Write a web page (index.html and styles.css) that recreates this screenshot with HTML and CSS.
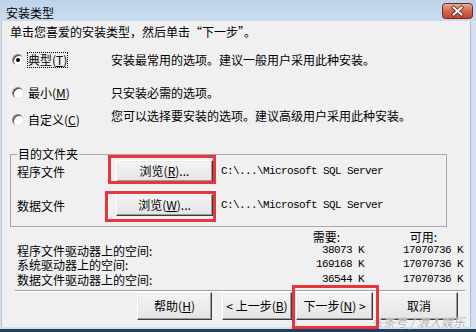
FILE: index.html
```html
<!DOCTYPE html>
<html lang="zh-CN">
<head>
<meta charset="utf-8">
<title>安装类型</title>
<link rel="stylesheet" href="styles.css">
</head>
<body>
<div class="window">
  <div class="titlebar">
    <span class="title">安装类型</span>
    <span class="close">
      <svg width="31" height="16" viewBox="0 0 31 16">
        <defs>
          <linearGradient id="cg" x1="0" y1="0" x2="0" y2="1">
            <stop offset="0" stop-color="#eab0a2"/>
            <stop offset="0.45" stop-color="#d56d58"/>
            <stop offset="1" stop-color="#c2412c"/>
          </linearGradient>
        </defs>
        <rect x="0.5" y="0.5" width="30" height="15" rx="3" fill="url(#cg)" stroke="#6b2a20"/>
        <path d="M11.5 4.5 L19.5 11.5 M19.5 4.5 L11.5 11.5" stroke="#5a2018" stroke-width="3.6" stroke-linecap="square"/>
        <path d="M11.5 4.5 L19.5 11.5 M19.5 4.5 L11.5 11.5" stroke="#ffffff" stroke-width="2" stroke-linecap="square"/>
      </svg>
    </span>
  </div>
  <div class="body">
    <p class="intro">单击您喜爱的安装类型，然后单击“下一步”。</p>
    <div class="options">
      <div class="opt">
        <div class="choice"><span class="radio checked"></span><span class="label focus">典型(<u>T</u>)</span></div>
        <span class="desc">安装最常用的选项。建议一般用户采用此种安装。</span>
      </div>
      <div class="opt opt-min">
        <div class="choice"><span class="radio"></span><span class="label">最小(<u>M</u>)</span></div>
        <span class="desc">只安装必需的选项。</span>
      </div>
      <div class="opt opt-custom">
        <div class="choice"><span class="radio"></span><span class="label">自定义(<u>C</u>)</span></div>
        <span class="desc desc-up">您可以选择要安装的选项。建议高级用户采用此种安装。</span>
      </div>
    </div>
    <fieldset class="dest">
      <legend>目的文件夹</legend>
      <div class="dest-row">
        <span>程序文件</span>
        <button class="btn btn-browse">浏览(<u>R</u>)...</button>
        <span class="path mono">C:\...\Microsoft SQL Server</span>
      </div>
      <div class="dest-row">
        <span>数据文件</span>
        <button class="btn btn-browse">浏览(<u>W</u>)...</button>
        <span class="path mono">C:\...\Microsoft SQL Server</span>
      </div>
    </fieldset>
    <div class="space">
      <span></span>
      <span class="head head-need">需要:</span>
      <span class="head head-free">可用:</span>
      <span>程序文件驱动器上的空间:</span>
      <span class="num mono">38073 K</span>
      <span class="num mono">17070736 K</span>
      <span>系统驱动器上的空间:</span>
      <span class="num mono">169168 K</span>
      <span class="num mono">17070736 K</span>
      <span>数据文件驱动器上的空间:</span>
      <span class="num mono">36544 K</span>
      <span class="num mono">17070736 K</span>
    </div>
    <div class="sep"></div>
    <div class="actions">
      <button class="btn btn-help">帮助(<u>H</u>)</button>
      <button class="btn btn-back">&lt; 上一步(<u>B</u>)</button>
      <button class="btn btn-next">下一步(<u>N</u>) &gt;</button>
      <button class="btn btn-cancel">取消</button>
    </div>
  </div>
  <div class="frame-bottom"></div>
  <span class="watermark">头条号 / 浪人娱乐</span>
  <span class="mark mark-1"></span>
  <span class="mark mark-2"></span>
  <span class="mark mark-3"></span>
</div>
</body>
</html>
```

FILE: styles.css
```css
html, body {
  margin: 0;
  padding: 0;
}

body {
  font-family: "Noto Sans CJK SC", "Liberation Sans", sans-serif;
  font-size: 12px;
  color: #000;
}

.window {
  position: relative;
  width: 476px;
  height: 332px;
  overflow: hidden;
  background: #d3e1ef;
  display: flex;
  flex-direction: column;
}

.titlebar {
  flex: none;
  height: 21px;
  display: flex;
  justify-content: space-between;
  align-items: flex-start;
  padding-left: 6px;
  background: linear-gradient(#bed3ea, #c9dbee);
}

.title {
  padding-top: 6px;
  line-height: 14px;
}

.close {
  display: block;
  margin-top: 3px;
  margin-right: 3px;
  height: 16px;
}

.close svg {
  display: block;
}

.body {
  flex: none;
  height: 306px;
  margin: 0 5px 0 1px;
  border-left: 1px solid #b7c8db;
  border-right: 1px solid #a9bbd0;
  background: #f0f0f0;
}

.intro {
  margin: 0;
  padding: 4px 0 0 8px;
  line-height: 14px;
  white-space: nowrap;
}

.options {
  margin-top: 13px;
}

.opt {
  display: grid;
  grid-template-columns: 99px auto;
  align-items: center;
  height: 16px;
  padding-left: 10px;
}

.opt-min {
  margin-top: 17px;
}

.opt-custom {
  margin-top: 11px;
}

.choice {
  display: flex;
  align-items: center;
  gap: 4px;
}

.radio {
  position: relative;
  width: 12px;
  height: 12px;
  box-sizing: border-box;
  border-radius: 50%;
  background: #fff;
  border: 1px solid;
  border-color: #8a8a8a #e4e4e4 #e4e4e4 #8a8a8a;
  box-shadow: inset 1px 1px 0 #404040;
}

.radio.checked::after {
  content: "";
  position: absolute;
  left: 3px;
  top: 3px;
  width: 4px;
  height: 4px;
  border-radius: 50%;
  background: #000;
}

.label {
  line-height: 14px;
  white-space: nowrap;
}

.focus {
  outline: 1px dotted #000;
}

.desc {
  line-height: 14px;
  white-space: nowrap;
}

.desc-up {
  margin-top: -8px;
}

.dest {
  margin: 20px 0 0 8px;
  width: 437px;
  box-sizing: border-box;
  padding: 0 0 10px 6px;
  border: 1px solid #a7a7a7;
  min-inline-size: 0;
}

.dest legend {
  padding: 0 1px;
  line-height: 12px;
}

.dest-row {
  display: grid;
  grid-template-columns: 99px 97px auto;
  align-items: center;
  height: 22px;
}

.dest-row + .dest-row {
  margin-top: 12px;
}

.mono {
  font-family: "Liberation Mono", "DejaVu Sans Mono", monospace;
  font-size: 11px;
  letter-spacing: -0.6px;
}

.path {
  padding-left: 8px;
  white-space: nowrap;
}

.btn {
  font-family: "Noto Sans CJK SC", "Liberation Sans", sans-serif;
  font-size: 12px;
  color: #000;
  padding: 0;
  margin: 0;
  box-sizing: border-box;
  background: linear-gradient(#f4f4f4, #e4e4e4);
  border: 1px solid;
  border-color: #ffffff #3c3c3c #3c3c3c #ffffff;
  box-shadow: inset -1px -1px 0 #9c9c9c, inset 1px 1px 0 #e8e8e8;
  white-space: nowrap;
  line-height: 14px;
}

.btn-browse {
  width: 97px;
  height: 22px;
}

.space {
  margin-top: 3px;
  padding: 0 7px 0 15px;
  display: grid;
  grid-template-columns: 1fr 80px 99px;
  grid-template-rows: 13px 14px 15px 15px;
  align-items: center;
  line-height: 13px;
  white-space: nowrap;
}

.head {
  text-align: right;
}

.head-need {
  padding-right: 24px;
}

.head-free {
  padding-right: 26px;
}

.num {
  text-align: right;
}

.sep {
  margin: 3px 5px 0 13px;
  height: 0;
  border-top: 1px solid #a0a0a0;
  border-bottom: 1px solid #ffffff;
}

.actions {
  display: flex;
  justify-content: flex-end;
  padding-right: 12px;
  height: 28px;
}

.actions .btn {
  height: 28px;
}

.btn-help {
  width: 75px;
}

.btn-back {
  width: 70px;
  margin-left: 10px;
}

.btn-next {
  width: 77px;
  margin-left: 4px;
}

.btn-cancel {
  width: 78px;
  margin-left: 7px;
}

.frame-bottom {
  flex: none;
  margin-top: 2px;
  height: 3px;
  background: #213f5c;
}

.watermark {
  position: absolute;
  left: 371px;
  top: 316px;
  font-size: 12px;
  line-height: 12px;
  font-style: italic;
  color: rgba(120, 120, 120, 0.6);
  text-shadow: 0 0 2px #ffffff, 0 0 1px #ffffff;
  white-space: nowrap;
}

.mark {
  position: absolute;
  box-sizing: border-box;
  border: 3px solid #e5373d;
}

.mark-1 {
  left: 108px;
  top: 155px;
  width: 108px;
  height: 29px;
}

.mark-2 {
  left: 105px;
  top: 191px;
  width: 111px;
  height: 31px;
}

.mark-3 {
  left: 292px;
  top: 285px;
  width: 87px;
  height: 44px;
}
```
